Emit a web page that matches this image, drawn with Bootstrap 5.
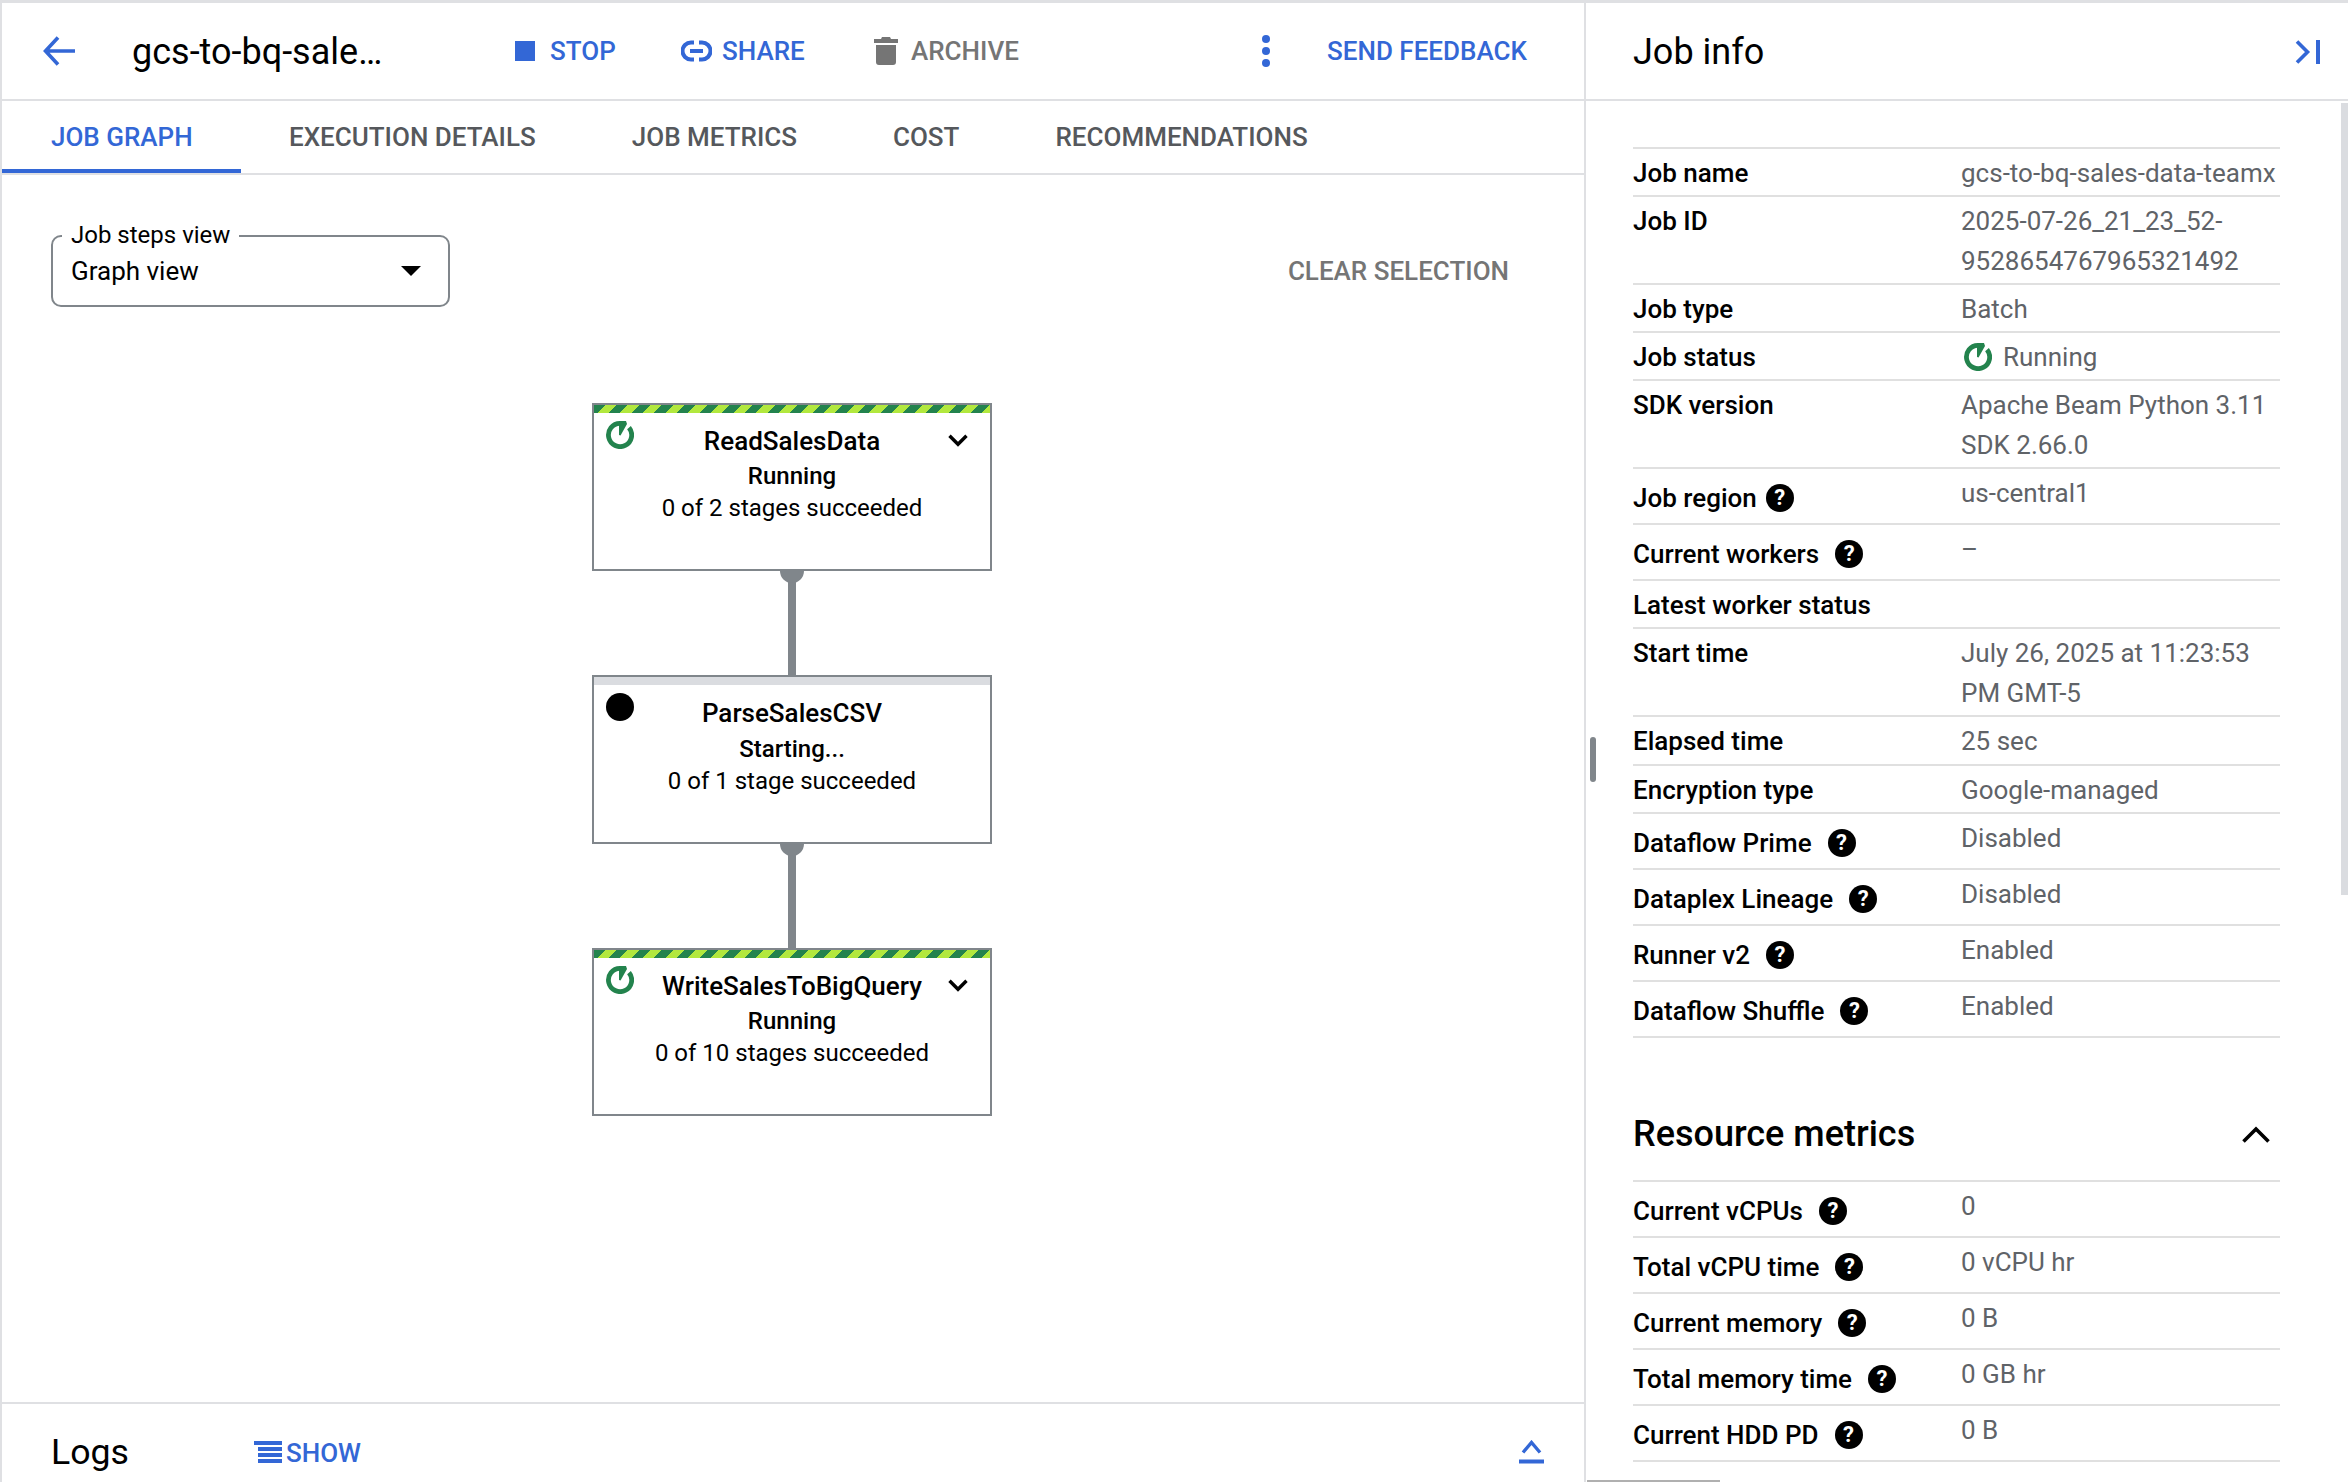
<!DOCTYPE html>
<html lang="en">
<head>
<meta charset="utf-8">
<title>Dataflow job</title>
<link href="https://cdn.jsdelivr.net/npm/bootstrap@5.3.0/dist/css/bootstrap.min.css" rel="stylesheet">
<style>
:root{--blue:#3367d6;--line:#dfe0e3;--grey:#5f6368;--node:#80868b;--green:#23834d}
html,body{height:100%;margin:0;overflow:hidden;background:#fff}
body{font-family:Roboto,"Liberation Sans",sans-serif;color:#000;font-size:26px}
.shell{height:1482px;border-top:3px solid var(--line);border-left:2px solid var(--line)}
.leftp{width:1584px;border-right:2px solid var(--line);flex:none}
.rightp{flex:1;min-width:0;position:relative;overflow:hidden}
.hdr{height:98px;border-bottom:2px solid var(--line);flex:none}
.act{font-weight:500;color:var(--blue);font-size:26px;white-space:nowrap}
.act-grey{color:#757575}
.slot-back{width:130px;padding-left:41px}
.slot-title{width:383px;font-size:36px;line-height:1;white-space:nowrap;padding-top:2px}
.slot-stop{width:166px}
.slot-share{width:193px}
.slot-arch{width:388px}
.slot-dots{width:65px}
.tabbar{height:74px;border-bottom:2px solid var(--line);flex:none}
.tabx{padding:0 48px;height:72px;font-weight:500;color:#55585c;font-size:26px;line-height:72px;white-space:nowrap}
.tabx.on{color:var(--blue);border-bottom:4px solid var(--blue);height:72px;width:239px;padding:0 49px}
.canvas{flex:1;min-height:0;padding:60px 75px 0 49px;overflow:hidden}
.selbox{width:399px;height:72px;border:2px solid var(--node);border-radius:10px;position:relative;padding:0 27px 0 18px}
.selbox-lbl{position:absolute;left:9px;top:-16px;background:#fff;padding:0 9px;line-height:28px;font-size:24px;white-space:nowrap}
.selbox-val{font-size:26px;line-height:1}
.caret{width:0;height:0;border-left:10px solid transparent;border-right:10px solid transparent;border-top:10px solid #000}
.clearb{font-weight:500;color:#757575;font-size:26px;white-space:nowrap}
.graph{width:400px;margin:96px 0 0 541px}
.gnode{height:168px;border:2px solid var(--node);background:#fff;position:relative;text-align:center}
.gnode-mid{height:169px}
.gnode-mid .gstat{margin-top:0}
.gbar{height:8px}
.gbar-run{background:repeating-linear-gradient(135deg,var(--green) 0 8px,#b2e83e 8px 16px)}
.gbar-wait{background:#dadce0}
.ghead{display:grid;grid-template-columns:56px 1fr 56px;align-items:start;padding-top:8px}
.gicon{width:28px;height:28px;margin-left:12px;display:block}
.gtitle{font-size:26px;font-weight:500;line-height:40px;white-space:nowrap}
.gchev{width:20px;height:13px;margin:13px 22px 0 auto;display:block}
.gstat{font-size:24px;font-weight:500;line-height:32px;margin-top:-1px}
.gsub{font-size:24px;line-height:32px;white-space:nowrap}
.gconn{width:8px;height:104px;background:var(--node);margin:0 auto;position:relative}
.gconn::before{content:"";position:absolute;left:-8px;top:0;width:24px;height:12px;background:var(--node);border-radius:0 0 12px 12px}
.logsbar{height:80px;border-top:2px solid var(--line);flex:none;padding:18px 40px 0 49px}
.logs-t{font-size:35.700px;width:203px;line-height:1;padding-top:2px}
.logs-s{font-weight:500;color:var(--blue);font-size:26px;margin-left:4px;padding-top:2px}
.rhead{height:98px;border-bottom:2px solid var(--line);padding:2px 28px 0 47px}
.rhead-t{font-size:36px;line-height:1}
.rbody{padding:46px 68px 0 47px}
.irow{display:flex;border-bottom:2px solid #e0e0e0;height:48px;padding-top:4px;line-height:40px}
.irow.first{height:2px;padding:0}
.irow.two{height:88px}
.irow.help{height:56px}
.irow.tall{height:49px}
.ilab{flex:0 0 328px;font-weight:500;white-space:nowrap;display:flex;align-items:flex-start;gap:16px}
.help .ilab{line-height:48px;align-items:center}
.help .ilab.tight{gap:9px}
.ival{color:var(--grey);flex:1;min-width:0;white-space:nowrap}
.qm{width:28px;height:28px;border-radius:50%;background:#000;color:#fff;font-size:22px;font-weight:700;line-height:28px;text-align:center;flex:none;display:inline-block}
.rmh{font-size:36px;font-weight:500;line-height:1}
.rmhead{height:144px;padding:50px 10px 0 0;border-bottom:2px solid #e0e0e0}
.vbar{position:absolute;right:0;top:100px;width:7px;height:792px;background:#dadce0}
.hbar{position:absolute;left:1px;bottom:0;width:133px;height:2px;background:#b0b0b0}
.grip{position:absolute;left:4px;top:734px;width:6px;height:45px;background:var(--node);border-radius:3px}
</style>
</head>
<body>
<div class="shell d-flex">
  <main class="leftp d-flex flex-column">
    <div class="hdr d-flex align-items-center">
      <div class="slot-back d-flex">
        <svg width="32" height="30" viewBox="0 0 32 30" fill="none" stroke="#3367d6" stroke-width="3.6"><path d="M32 15H3M15 1.5L2.500 15L15 28.500"/></svg>
      </div>
      <div class="slot-title">gcs-to-bq-sale…</div>
      <div class="slot-stop d-flex align-items-center act" style="gap:15px"><svg width="20" height="20" viewBox="0 0 20 20"><rect width="20" height="20" fill="#3367d6"/></svg><span>STOP</span></div>
      <div class="slot-share d-flex align-items-center act" style="gap:10px"><svg width="31" height="22" viewBox="0 0 31 22" fill="none" stroke="#3367d6" stroke-width="4"><path d="M13 2.500H10a8.500 8.500 0 0 0 0 17h3M18 2.500h3a8.500 8.500 0 0 1 0 17h-3M9 11h13"/></svg><span>SHARE</span></div>
      <div class="slot-arch d-flex align-items-center act act-grey" style="gap:13px"><svg width="24" height="28" viewBox="0 0 24 28" fill="#757575"><path d="M8 0h8l1 2h7v4H0V2h7zM2 8h20v17a3 3 0 0 1-3 3H5a3 3 0 0 1-3-3z"/></svg><span>ARCHIVE</span></div>
      <div class="slot-dots d-flex"><svg width="8" height="32" viewBox="0 0 8 32" fill="#3367d6"><circle cx="4" cy="4" r="4"/><circle cx="4" cy="16" r="4"/><circle cx="4" cy="28" r="4"/></svg></div>
      <div class="act">SEND FEEDBACK</div>
    </div>
    <div class="tabbar d-flex">
      <div class="tabx on">JOB GRAPH</div>
      <div class="tabx">EXECUTION DETAILS</div>
      <div class="tabx">JOB METRICS</div>
      <div class="tabx">COST</div>
      <div class="tabx">RECOMMENDATIONS</div>
    </div>
    <div class="canvas">
      <div class="d-flex justify-content-between align-items-center">
        <div class="selbox d-flex align-items-center justify-content-between">
          <span class="selbox-lbl">Job steps view</span>
          <span class="selbox-val">Graph view</span>
          <span class="caret"></span>
        </div>
        <div class="clearb">CLEAR SELECTION</div>
      </div>
      <div class="graph">
        <div class="gnode">
          <div class="gbar gbar-run"></div>
          <div class="ghead">
            <svg class="gicon" viewBox="0 0 28 28"><path d="M14 2.400A11.600 11.600 0 1 0 23 6.600" fill="none" stroke="#23834d" stroke-width="4.800"/><path d="M13 0h7l1 3L14.500 14.500 13 14z" fill="#23834d"/></svg>
            <div class="gtitle">ReadSalesData</div>
            <svg class="gchev" viewBox="0 0 20 13" fill="none" stroke="#000" stroke-width="3.400"><path d="M1.500 1.800L10 10.300L18.500 1.800"/></svg>
          </div>
          <div class="gstat">Running</div>
          <div class="gsub">0 of 2 stages succeeded</div>
        </div>
        <div class="gconn"></div>
        <div class="gnode gnode-mid">
          <div class="gbar gbar-wait"></div>
          <div class="ghead">
            <svg class="gicon" viewBox="0 0 28 28"><circle cx="14" cy="14" r="14" fill="#000"/></svg>
            <div class="gtitle">ParseSalesCSV</div>
            <span></span>
          </div>
          <div class="gstat">Starting...</div>
          <div class="gsub">0 of 1 stage succeeded</div>
        </div>
        <div class="gconn"></div>
        <div class="gnode">
          <div class="gbar gbar-run"></div>
          <div class="ghead">
            <svg class="gicon" viewBox="0 0 28 28"><path d="M14 2.400A11.600 11.600 0 1 0 23 6.600" fill="none" stroke="#23834d" stroke-width="4.800"/><path d="M13 0h7l1 3L14.500 14.500 13 14z" fill="#23834d"/></svg>
            <div class="gtitle">WriteSalesToBigQuery</div>
            <svg class="gchev" viewBox="0 0 20 13" fill="none" stroke="#000" stroke-width="3.400"><path d="M1.500 1.800L10 10.300L18.500 1.800"/></svg>
          </div>
          <div class="gstat">Running</div>
          <div class="gsub">0 of 10 stages succeeded</div>
        </div>
      </div>
    </div>
    <div class="logsbar d-flex align-items-center">
      <div class="logs-t">Logs</div>
      <svg width="28" height="22" viewBox="0 0 28 22" fill="#3367d6"><rect width="28" height="4"/><rect x="4" y="6" width="24" height="4"/><rect x="4" y="12" width="24" height="4"/><rect x="4" y="18" width="24" height="4"/></svg>
      <div class="logs-s">SHOW</div>
      <svg class="ms-auto" width="25" height="24" viewBox="0 0 25 24" fill="none" stroke="#3367d6"><path stroke-width="3.400" d="M4 12.500L12.500 2.500L21 12.500"/><path stroke-width="4" d="M0 21.500h25"/></svg>
    </div>
  </main>
  <aside class="rightp">
    <div class="rhead d-flex align-items-center justify-content-between">
      <div class="rhead-t">Job info</div>
      <svg width="26" height="24" viewBox="0 0 26 24" fill="none" stroke="#3367d6"><path stroke-width="3.600" d="M3 1.500L13.500 12L3 22.500"/><path stroke-width="4" d="M24 0v24"/></svg>
    </div>
    <div class="rbody">
      <div class="irow first"></div>
      <div class="irow"><div class="ilab">Job name</div><div class="ival">gcs-to-bq-sales-data-teamx</div></div>
      <div class="irow two"><div class="ilab">Job ID</div><div class="ival">2025-07-26_21_23_52-<br>9528654767965321492</div></div>
      <div class="irow"><div class="ilab">Job type</div><div class="ival">Batch</div></div>
      <div class="irow"><div class="ilab">Job status</div><div class="ival d-flex align-items-center" style="gap:11px;height:40px"><svg class="flex-none" width="28" height="28" viewBox="0 0 28 28" style="margin-left:3px"><path d="M14 2.400A11.600 11.600 0 1 0 23 6.600" fill="none" stroke="#23834d" stroke-width="4.800"/><path d="M13 0h7l1 3L14.500 14.500 13 14z" fill="#23834d"/></svg><span>Running</span></div></div>
      <div class="irow two"><div class="ilab">SDK version</div><div class="ival">Apache Beam Python 3.11<br>SDK 2.66.0</div></div>
      <div class="irow help"><div class="ilab tight">Job region <span class="qm">?</span></div><div class="ival">us-central1</div></div>
      <div class="irow help"><div class="ilab">Current workers <span class="qm">?</span></div><div class="ival">–</div></div>
      <div class="irow"><div class="ilab">Latest worker status</div><div class="ival"></div></div>
      <div class="irow two"><div class="ilab">Start time</div><div class="ival">July 26, 2025 at 11:23:53<br>PM GMT-5</div></div>
      <div class="irow tall"><div class="ilab">Elapsed time</div><div class="ival">25 sec</div></div>
      <div class="irow"><div class="ilab">Encryption type</div><div class="ival">Google-managed</div></div>
      <div class="irow help"><div class="ilab">Dataflow Prime <span class="qm">?</span></div><div class="ival">Disabled</div></div>
      <div class="irow help"><div class="ilab">Dataplex Lineage <span class="qm">?</span></div><div class="ival">Disabled</div></div>
      <div class="irow help"><div class="ilab">Runner v2 <span class="qm">?</span></div><div class="ival">Enabled</div></div>
      <div class="irow help"><div class="ilab">Dataflow Shuffle <span class="qm">?</span></div><div class="ival">Enabled</div></div>
      <div class="rmhead d-flex align-items-center justify-content-between">
        <div class="rmh">Resource metrics</div>
        <svg width="28" height="17" viewBox="0 0 28 17" fill="none" stroke="#000" stroke-width="3.600"><path d="M1.500 15.500L14 3L26.500 15.500"/></svg>
      </div>
      <div class="irow help"><div class="ilab">Current vCPUs <span class="qm">?</span></div><div class="ival">0</div></div>
      <div class="irow help"><div class="ilab">Total vCPU time <span class="qm">?</span></div><div class="ival">0 vCPU hr</div></div>
      <div class="irow help"><div class="ilab">Current memory <span class="qm">?</span></div><div class="ival">0 B</div></div>
      <div class="irow help"><div class="ilab">Total memory time <span class="qm">?</span></div><div class="ival">0 GB hr</div></div>
      <div class="irow help"><div class="ilab">Current HDD PD <span class="qm">?</span></div><div class="ival">0 B</div></div>
    </div>
    <div class="vbar"></div>
    <div class="hbar"></div>
    <div class="grip"></div>
  </aside>
</div>
<script src="https://cdn.jsdelivr.net/npm/bootstrap@5.3.0/dist/js/bootstrap.bundle.min.js"></script>
</body>
</html>
